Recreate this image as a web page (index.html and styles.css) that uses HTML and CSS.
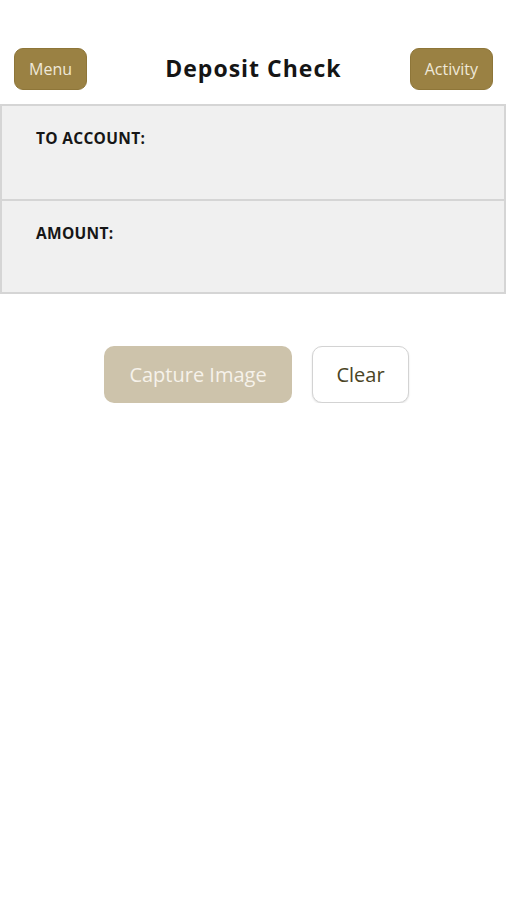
FILE: index.html
```html
<!DOCTYPE html>
<html lang="en">
<head>
<meta charset="utf-8">
<title>Deposit Check</title>
<meta name="viewport" content="width=device-width, initial-scale=1.0">
<link rel="stylesheet" href="styles.css">
</head>
<body>
<div class="header">
<button class="nav-btn">Menu</button>
<div class="title">Deposit Check</div>
<button class="nav-btn">Activity</button>
</div>

<div class="panel">
<div class="row">
<div class="label">TO ACCOUNT:</div>
</div>
<div class="row">
<div class="label">AMOUNT:</div>
</div>
</div>

<div class="actions">
<button class="btn btn-capture">Capture Image</button>
<button class="btn btn-clear">Clear</button>
</div>
</body>
</html>
```

FILE: styles.css
```css
* {
margin: 0;
padding: 0;
box-sizing: border-box;
}

body {
background-color: #fff;
font-family: "Open Sans", "Noto Sans", sans-serif;
color: #111;
}

.header {
display: flex;
justify-content: space-between;
align-items: center;
padding: 48px 13px 14px 14px;
}

.nav-btn {
height: 42px;
padding: 0 14px;
border: 1px solid #8e7639;
border-radius: 9px;
background-color: #9a8143;
color: #efe8d8;
font-family: inherit;
font-size: 16px;
}

.title {
font-size: 23px;
font-weight: bold;
letter-spacing: 1px;
color: #151515;
margin-left: 10px;
margin-bottom: 2px;
}

.panel {
border: 2px solid #d5d5d5;
background-color: #f0f0f0;
}

.row {
height: 93px;
padding: 21px 34px;
}

.row + .row {
border-top: 2px solid #d5d5d5;
}

.label {
font-size: 15.5px;
font-weight: bold;
letter-spacing: 0.3px;
color: #161616;
}

.actions {
display: flex;
justify-content: center;
gap: 20px;
margin-top: 52px;
padding-left: 7px;
}

.btn {
height: 57px;
border-radius: 10px;
font-family: inherit;
font-size: 20px;
}

.btn-capture {
width: 188px;
border: none;
background-color: #cdc3ab;
color: #f6f2ea;
}

.btn-clear {
width: 97px;
border: 1px solid #d3d3d3;
background-color: #fff;
color: #4a4424;
box-shadow: 0 1px 2px rgba(0, 0, 0, 0.12);
}
```
